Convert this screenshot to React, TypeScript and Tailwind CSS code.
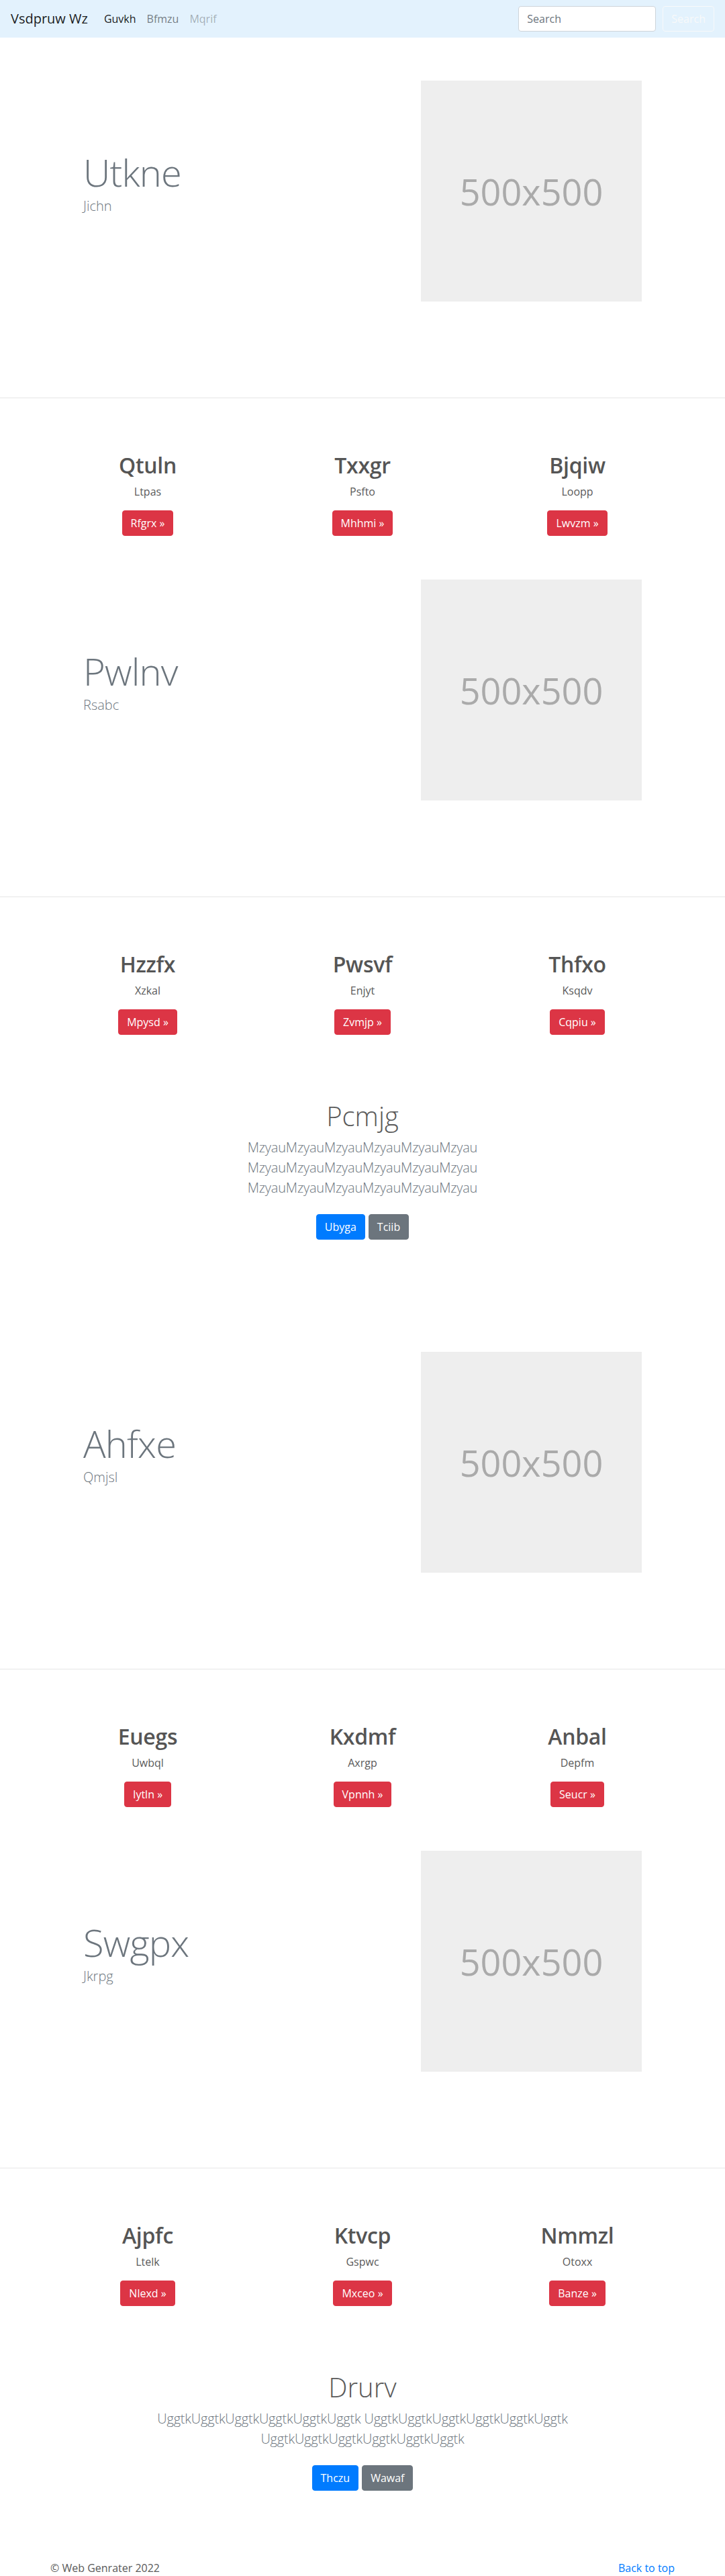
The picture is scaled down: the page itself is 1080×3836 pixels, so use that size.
import React from 'react'

// Bootstrap-ish landing page, rebuilt with tailwind

type Feature = { title: string; text: string; btn: string }

function Navbar() {
  return (
    <nav className="flex h-14 items-center bg-[#e3f2fd] px-4">
      <a className="mr-4 text-[20px] leading-[30px] text-black/90">Vsdpruw Wz</a>
      <ul className="flex text-[16px] leading-6">
        <li className="px-2 text-black/90">Guvkh</li>
        <li className="px-2 text-black/50">Bfmzu</li>
        <li className="px-2 text-black/30">Mqrif</li>
      </ul>
      <form className="ml-auto flex items-center">
        <input
          className="mr-[10px] h-[38px] w-[205px] rounded border border-[#ced4da] bg-white px-3 text-[16px] text-[#495057] placeholder:text-[#6c757d]"
          placeholder="Search"
        />
        <button className="h-[38px] rounded border border-[#f8f9fa] px-3 text-[16px] text-[#f8f9fa]">
          Search
        </button>
      </form>
    </nav>
  )
}

function Placeholder() {
  return (
    <div className="flex h-[329px] w-[329px] shrink-0 items-center justify-center bg-[#eeeeee]">
      <span className="text-[54px] leading-none text-[#aaaaaa]">500x500</span>
    </div>
  )
}

function Hero({ title, sub }: { title: string; sub: string }) {
  return (
    <section className="h-[536px] pt-16">
      <div className="mx-auto flex w-[960px] items-start justify-between px-16">
        <div className="pt-[108px]">
          <h2 className="mb-2 text-[56px] font-light leading-none tracking-[-0.8px] text-[#6c757d]">{title}</h2>
          <p className="text-[20px] font-light leading-[30px] text-[#6c757d]">{sub}</p>
        </div>
        <Placeholder />
      </div>
    </section>
  )
}

function Divider() {
  return <div className="h-px bg-[#e6e6e6]" />
}

function Features({ items }: { items: Feature[] }) {
  return (
    <section className="h-[206px] pt-[81px]">
      <div className="mx-auto grid w-[960px] grid-cols-3">
        {items.map((f) => (
          <div key={f.title} className="flex flex-col items-center px-[15px] text-center text-[#5a5a5a]">
            <h2 className="mb-2 text-[32px] font-semibold leading-[1.2] tracking-[-0.3px] text-[#555555]">{f.title}</h2>
            <p className="mb-4 text-[16px] leading-6">{f.text}</p>
            <a className="h-[38px] rounded border border-[#dc3545] bg-[#dc3545] px-3 text-[16px] leading-[36px] text-white">
              {f.btn} &raquo;
            </a>
          </div>
        ))}
      </div>
    </section>
  )
}

function Center({ title, lines, primary, secondary }: { title: string; lines: string[]; primary: string; secondary: string }) {
  return (
    <section className="pb-[95px] pt-24 text-center">
      <div className="mx-auto flex w-[640px] flex-col">
        <h1 className="mb-2 text-[40px] font-light leading-[48px] text-[#5a5a5a]">{title}</h1>
        <p className="mb-4 text-[20px] font-light leading-[30px] tracking-[-0.2px] text-[#6c757d]">{lines.join(' ')}</p>
        <div className="my-2 flex justify-center gap-[5px]">
          <a className="h-[38px] rounded border border-[#007bff] bg-[#007bff] px-3 text-[16px] leading-[36px] text-white">{primary}</a>
          <a className="h-[38px] rounded border border-[#6c757d] bg-[#6c757d] px-3 text-[16px] leading-[36px] text-white">{secondary}</a>
        </div>
      </div>
    </section>
  )
}

const mz = 'Mzyau'.repeat(6)
const ug = 'Uggtk'.repeat(6)

export default function App() {
  return (
    <div className="min-h-screen bg-white font-['Open_Sans',sans-serif] text-[#5a5a5a]">
      <Navbar />
      <Hero title="Utkne" sub="Jichn" />
      <Divider />
      <Features
        items={[
          { title: 'Qtuln', text: 'Ltpas', btn: 'Rfgrx' },
          { title: 'Txxgr', text: 'Psfto', btn: 'Mhhmi' },
          { title: 'Bjqiw', text: 'Loopp', btn: 'Lwvzm' },
        ]}
      />
      <Hero title="Pwlnv" sub="Rsabc" />
      <Divider />
      <Features
        items={[
          { title: 'Hzzfx', text: 'Xzkal', btn: 'Mpysd' },
          { title: 'Pwsvf', text: 'Enjyt', btn: 'Zvmjp' },
          { title: 'Thfxo', text: 'Ksqdv', btn: 'Cqpiu' },
        ]}
      />
      <Center title="Pcmjg" lines={[mz, mz, mz]} primary="Ubyga" secondary="Tciib" />
      <Hero title="Ahfxe" sub="Qmjsl" />
      <Divider />
      <Features
        items={[
          { title: 'Euegs', text: 'Uwbql', btn: 'Iytln' },
          { title: 'Kxdmf', text: 'Axrgp', btn: 'Vpnnh' },
          { title: 'Anbal', text: 'Depfm', btn: 'Seucr' },
        ]}
      />
      <Hero title="Swgpx" sub="Jkrpg" />
      <Divider />
      <Features
        items={[
          { title: 'Ajpfc', text: 'Ltelk', btn: 'Nlexd' },
          { title: 'Ktvcp', text: 'Gspwc', btn: 'Mxceo' },
          { title: 'Nmmzl', text: 'Otoxx', btn: 'Banze' },
        ]}
      />
      <Center title="Drurv" lines={[ug, ug, ug]} primary="Thczu" secondary="Wawaf" />
      <footer className="mx-auto flex w-[960px] justify-between px-[15px] text-[16px] leading-6">
        <p>&copy; Web Genrater 2022</p>
        <a className="text-[#007bff]">Back to top</a>
      </footer>
    </div>
  )
}
